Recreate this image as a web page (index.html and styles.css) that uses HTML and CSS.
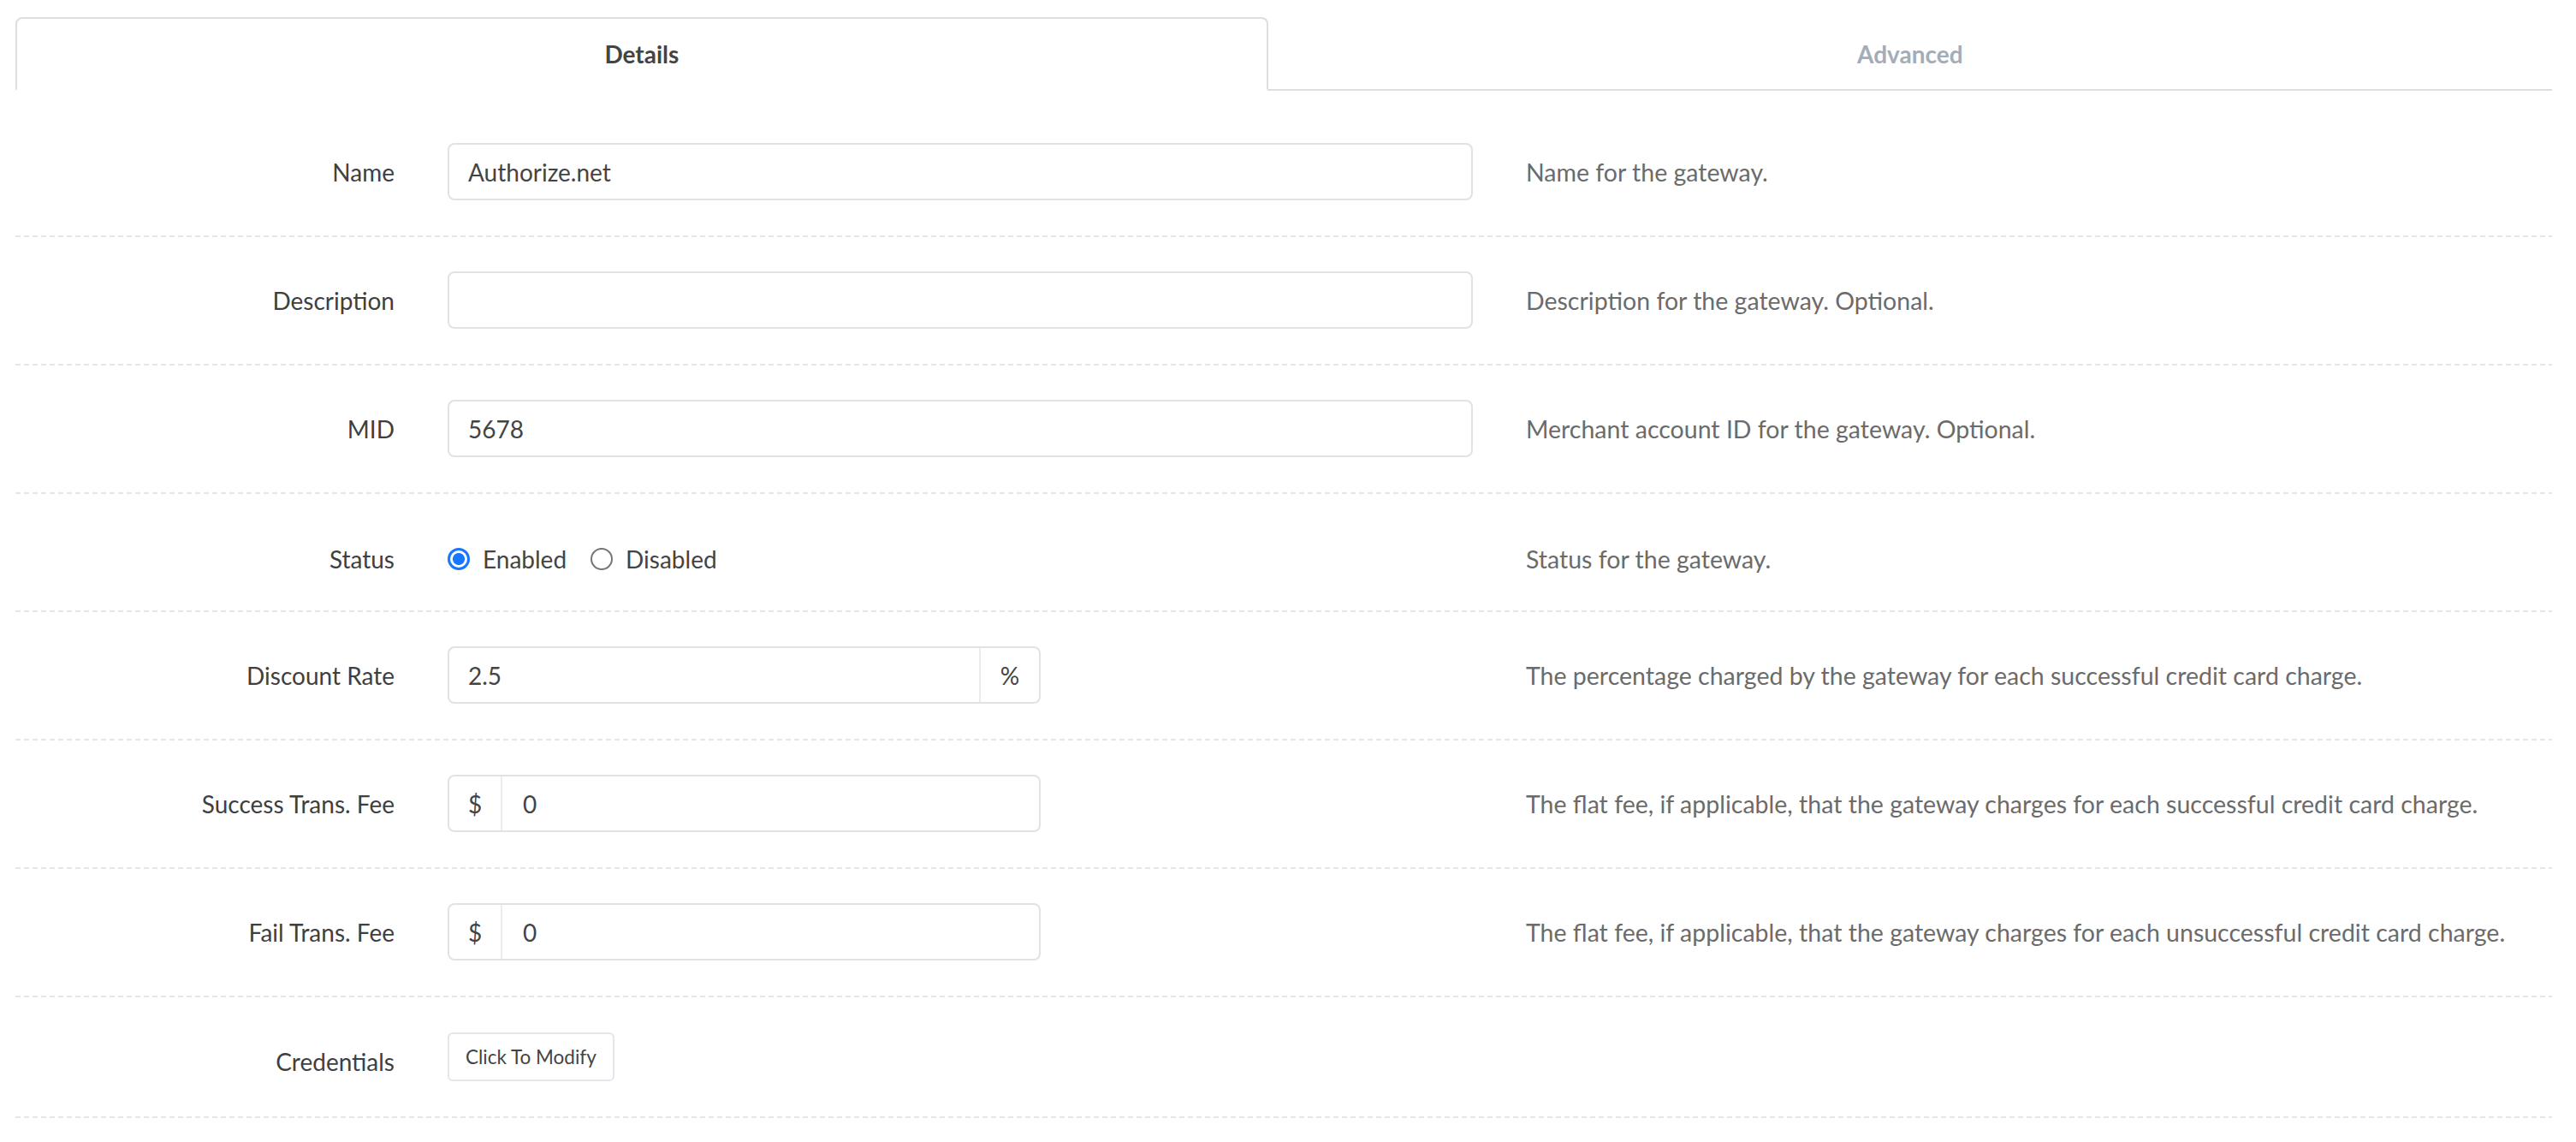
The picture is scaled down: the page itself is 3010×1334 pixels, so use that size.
FILE: index.html
```html
<!DOCTYPE html>
<html lang="en">
<head>
<meta charset="utf-8">
<title>Gateway – Details</title>
<link rel="stylesheet" href="styles.css">
</head>
<body>
<div class="page">
  <nav class="tabs">
    <a class="tab active">Details</a>
    <a class="tab">Advanced</a>
  </nav>
  <form class="form">
    <div class="row">
      <label class="label">Name</label>
      <div class="field"><input class="input" type="text" value="Authorize.net"></div>
      <p class="help">Name for the gateway.</p>
    </div>
    <div class="row">
      <label class="label">Description</label>
      <div class="field"><input class="input" type="text" value=""></div>
      <p class="help">Description for the gateway. Optional.</p>
    </div>
    <div class="row">
      <label class="label">MID</label>
      <div class="field"><input class="input" type="text" value="5678"></div>
      <p class="help">Merchant account ID for the gateway. Optional.</p>
    </div>
    <div class="row row-status">
      <label class="label">Status</label>
      <div class="field radios">
        <label class="radio"><input type="radio" name="status" checked><span>Enabled</span></label>
        <label class="radio"><input type="radio" name="status"><span>Disabled</span></label>
      </div>
      <p class="help">Status for the gateway.</p>
    </div>
    <div class="row">
      <label class="label">Discount Rate</label>
      <div class="field">
        <div class="group">
          <input class="group-input" type="text" value="2.5">
          <span class="addon addon-right">%</span>
        </div>
      </div>
      <p class="help">The percentage charged by the gateway for each successful credit card charge.</p>
    </div>
    <div class="row">
      <label class="label">Success Trans. Fee</label>
      <div class="field">
        <div class="group">
          <span class="addon addon-left">$</span>
          <input class="group-input" type="text" value="0">
        </div>
      </div>
      <p class="help">The flat fee, if applicable, that the gateway charges for each successful credit card charge.</p>
    </div>
    <div class="row">
      <label class="label">Fail Trans. Fee</label>
      <div class="field">
        <div class="group">
          <span class="addon addon-left">$</span>
          <input class="group-input" type="text" value="0">
        </div>
      </div>
      <p class="help">The flat fee, if applicable, that the gateway charges for each unsuccessful credit card charge.</p>
    </div>
    <div class="row row-creds">
      <label class="label">Credentials</label>
      <div class="field"><button class="btn" type="button">Click To Modify</button></div>
      <p class="help"></p>
    </div>
  </form>
</div>
</body>
</html>
```
FILE: styles.css
```css
* { box-sizing: border-box; }

html, body {
  margin: 0;
  background: #fff;
}

body {
  font-family: Lato, "Open Sans", "Liberation Sans", sans-serif;
  color: #444;
}

.page {
  padding: 20px 28px 0 18px;
}

/* Tabs */
.tabs {
  display: flex;
  border-bottom: 2px solid #dedede;
}

.tab {
  flex: 1 1 auto;
  text-align: center;
  padding: 20px 0;
  line-height: 42px;
  font-size: 28px;
  font-weight: 700;
  color: #a3adb9;
  border: 2px solid transparent;
  border-radius: 8px 8px 0 0;
  margin-bottom: -2px;
}

.tab.active {
  color: #444;
  border-color: #dedede #dedede #fff;
  background: #fff;
}

/* Form rows */
.form {
  padding-top: 21px;
}

.row {
  display: flex;
  align-items: center;
  column-gap: 62px;
  padding: 40px 0 43px;
  background: repeating-linear-gradient(to right, #e3e7ec 0 6px, transparent 6px 10px) left bottom / 100% 2px no-repeat;
}

.label {
  flex: none;
  width: 443px;
  text-align: right;
  font-size: 28px;
  line-height: 40px;
  color: #3f3f3f;
}

.field {
  flex: none;
  width: 1198px;
}

.help {
  flex: 1 1 auto;
  margin: 0;
  font-size: 28.5px;
  line-height: 40px;
  color: #6b6b6b;
}

.input {
  display: block;
  width: 100%;
  height: 67px;
  padding: 0 22px;
  border: 2px solid #e2e2e2;
  border-radius: 8px;
  font: inherit;
  font-size: 28px;
  color: #444;
  background: #fff;
  outline: none;
}

/* Status row */
.row-status {
  padding: 56px 0 42px;
}

.radios {
  display: flex;
  align-items: center;
  gap: 28px;
  height: 40px;
}

.radio {
  display: flex;
  align-items: center;
  gap: 15px;
  font-size: 28px;
  line-height: 40px;
  color: #444;
}

.radio input {
  appearance: none;
  -webkit-appearance: none;
  margin: 0;
  width: 26px;
  height: 26px;
  border-radius: 50%;
  border: 2px solid #767676;
  background: #fff;
}

.radio input:checked {
  border: 3px solid #1677ff;
  background: radial-gradient(circle, #1677ff 0 6.5px, #fff 7.5px);
}

/* Input groups */
.group {
  display: flex;
  width: 693px;
  height: 67px;
  border: 2px solid #e2e2e2;
  border-radius: 8px;
  overflow: hidden;
  background: #fff;
}

.group-input {
  flex: 1 1 auto;
  min-width: 0;
  border: 0;
  padding: 0 22px;
  font: inherit;
  font-size: 28px;
  color: #444;
  outline: none;
  background: transparent;
}

.addon {
  flex: none;
  display: flex;
  align-items: center;
  justify-content: center;
  font-size: 28px;
  color: #444;
}

.addon-right {
  width: 70px;
  border-left: 2px solid #ececec;
}

.addon-left {
  width: 62px;
  border-right: 2px solid #ececec;
}

.addon-left + .group-input {
  padding-left: 24px;
}

/* Credentials row */
.row-creds {
  align-items: flex-start;
  padding: 41px 0 43px;
}

.row-creds .label {
  padding-top: 14px;
}

.btn {
  height: 57px;
  padding: 0 19px;
  border: 2px solid #e3e6ea;
  border-radius: 6px;
  background: #fff;
  font-family: inherit;
  font-size: 22.5px;
  color: #444;
}
```
